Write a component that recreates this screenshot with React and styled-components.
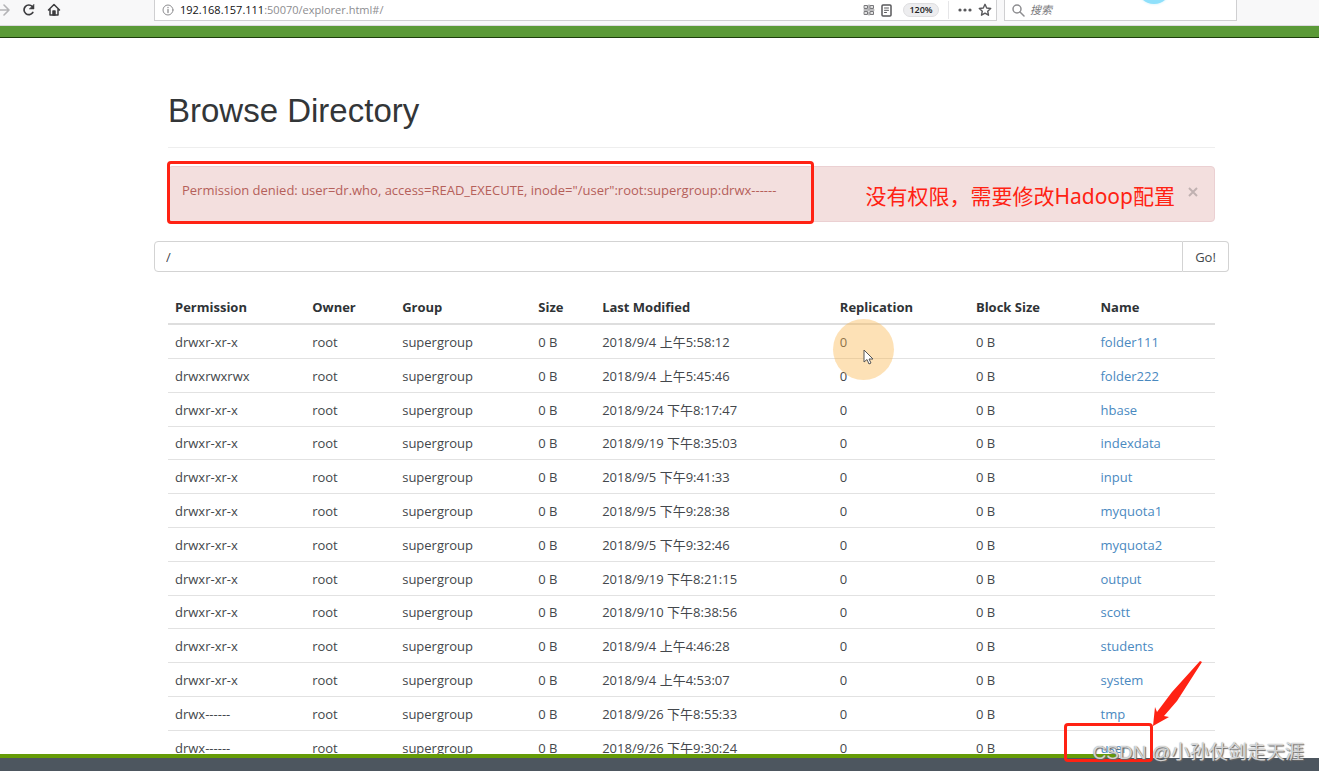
import React from "react";
import styled, { createGlobalStyle } from "styled-components";

const Global = createGlobalStyle`
  *, *::before, *::after { box-sizing: border-box; }
  html, body { margin: 0; padding: 0; height: 100%; overflow: hidden; background: #fff; }
  #root { height: 100%; }
  body {
    font-family: "Open Sans", "Noto Sans CJK SC", sans-serif;
    font-size: 13px;
    line-height: 20px;
    color: #43474b;
  }
  button, input { font: inherit; color: inherit; }
`;

const Screen = styled.div`
  position: relative;
  display: flex;
  flex-direction: column;
  height: 100vh;
  overflow: hidden;
`;

const Toolbar = styled.header`
  position: relative;
  display: grid;
  grid-template-columns: 147px minmax(0, 843px) minmax(0, 233px) minmax(0, 1fr);
  column-gap: 7px;
  flex: none;
  height: 26px;
  background: #f8f8f9;
  border-bottom: 1px solid #dcdadf;
  overflow: hidden;
`;

const NavButtons = styled.nav`
  display: flex;
  align-items: flex-start;
  margin-left: -4px;
  padding-top: 2px;
  gap: 9px;
`;

const IconButton = styled.button`
  display: flex;
  padding: 0;
  border: 0;
  background: none;
  color: ${(p) => p.$color || "#3c3c3f"};
`;

const Field = styled.div`
  display: flex;
  align-items: center;
  height: 21px;
  padding: 0 4px 0 7px;
  background: #fff;
  border: 1px solid #cfcfd1;
  border-top: 0;
  font-size: 11px;
  line-height: 20px;
  color: #8d8d90;
`;

const Address = styled.span`
  flex: 1;
  margin-left: 6px;
  strong { font-weight: 400; color: #111; }
`;

const FieldTools = styled.div`
  display: flex;
  align-items: center;
  gap: 6px;
`;

const Zoom = styled.button`
  height: 14px;
  width: 36px;
  margin-left: 4px;
  padding: 0;
  border: 1px solid #dedee0;
  border-radius: 7px;
  background: #ededef;
  color: #222;
  font-size: 9px;
  font-weight: 600;
  line-height: 12px;
`;

const Divider = styled.span`
  width: 1px;
  height: 18px;
  margin: 0 3px;
  background: #e6e6e8;
`;

const SearchInput = styled.input`
  flex: 1;
  min-width: 0;
  margin-left: 5px;
  padding: 0;
  border: 0;
  outline: 0;
  background: none;
  font-style: italic;
  &::placeholder { color: #77777a; opacity: 1; }
`;

const Bubble = styled.span`
  position: absolute;
  top: -30px;
  left: 1137px;
  width: 34px;
  height: 34px;
  border-radius: 50%;
  background: #8fe0fb;
  box-shadow: 0 0 3px #c9effb;
`;

const NavStrip = styled.div`
  flex: none;
  height: 12px;
  background: #5b9a38;
  border-bottom: 1px solid #1d3f0c;
`;

const Page = styled.main`
  flex: 1;
  min-height: 0;
  overflow: hidden;
  padding: 52px 104px 0 168px;
`;

const Title = styled.h1`
  margin: 0;
  padding-bottom: 15px;
  border-bottom: 1px solid #eee;
  font-family: "Liberation Sans", Arial, sans-serif;
  font-size: 33px;
  line-height: 42px;
  font-weight: 400;
  color: #333638;
`;

const Alert = styled.div`
  position: relative;
  display: flex;
  align-items: flex-start;
  height: 56px;
  margin-top: 18px;
  padding: 13px 15px 0 13px;
  border: 1px solid #ebd0d2;
  border-radius: 4px;
  background: #f3dfde;
  color: #b5605a;
`;

const Message = styled.span`
  flex: 1;
  white-space: nowrap;
`;

const Close = styled.button`
  padding: 0;
  border: 0;
  background: none;
  color: #c0b1b1;
  display: flex;
  margin-top: 6px;
`;

const Frame = styled.div`
  position: absolute;
  border: 3px solid #ff2213;
  border-radius: 4px;
`;

const AlertFrame = styled(Frame)`
  top: -6px;
  left: -2px;
  width: 647px;
  height: 63px;
`;

const Note = styled.span`
  position: absolute;
  top: 14px;
  right: 39px;
  font-family: "Noto Sans", "Noto Sans CJK SC", sans-serif;
  font-size: 21px;
  line-height: 30px;
  color: #ff2213;
  white-space: nowrap;
`;

const PathForm = styled.form`
  display: flex;
  height: 31px;
  margin: 19px -14px 0;
`;

const PathInput = styled.input`
  flex: 1;
  min-width: 0;
  padding: 0 11px;
  border: 1px solid #d3d3d3;
  border-radius: 4px 0 0 4px;
  background: #fff;
  outline: 0;
`;

const GoButton = styled.button`
  width: 46px;
  padding: 0;
  border: 1px solid #d3d3d3;
  border-left: 0;
  border-radius: 0 4px 4px 0;
  background: #fff;
`;

const Table = styled.table`
  width: 100%;
  margin-top: 19px;
  table-layout: fixed;
  border-collapse: separate;
  border-spacing: 0;
  th, td {
    padding: 0 0 0 7px;
    text-align: left;
    white-space: nowrap;
  }
  th {
    height: 34px;
    border-bottom: 2px solid #dedede;
    color: #2f3336;
    font-weight: 700;
  }
  td {
    height: 34px;
    border-bottom: 1px solid #e2e2e2;
  }
  tbody tr:nth-child(5n + 4) td { height: 33px; }
`;

const Col = styled.col`
  width: ${(p) => p.$w}%;
`;

const FileLink = styled.a`
  color: #4a89bf;
  text-decoration: none;
`;

const Footer = styled.footer`
  flex: none;
  height: 17px;
  padding-top: 4px;
  background: #4d565f content-box;
  position: relative;
  &::before {
    content: "";
    position: absolute;
    top: 0;
    left: 0;
    right: 202px;
    height: 4px;
    background: #669c07;
  }
`;

const Pointer = styled.span`
  position: absolute;
  top: 319px;
  left: 833px;
  width: 61px;
  height: 61px;
  border-radius: 50%;
  background: rgba(250, 181, 72, 0.4);
  svg { position: absolute; top: 30px; left: 30px; }
`;

const UserFrame = styled(Frame)`
  top: 723px;
  left: 1064px;
  width: 89px;
  height: 39px;
`;

const Arrow = styled.svg`
  position: absolute;
  top: 660px;
  left: 1150px;
`;

const Watermark = styled.span`
  position: absolute;
  right: 15px;
  bottom: 5px;
  font-family: "Liberation Sans", "Noto Sans CJK SC", sans-serif;
  font-size: 19px;
  line-height: 26px;
  color: rgba(255, 255, 255, 0.7);
  text-shadow: 1px 1px 1px #666, 0 0 1px #777;
  white-space: nowrap;
`;

const rows = [
  ["drwxr-xr-x", "2018/9/4 上午5:58:12", "folder111"],
  ["drwxrwxrwx", "2018/9/4 上午5:45:46", "folder222"],
  ["drwxr-xr-x", "2018/9/24 下午8:17:47", "hbase"],
  ["drwxr-xr-x", "2018/9/19 下午8:35:03", "indexdata"],
  ["drwxr-xr-x", "2018/9/5 下午9:41:33", "input"],
  ["drwxr-xr-x", "2018/9/5 下午9:28:38", "myquota1"],
  ["drwxr-xr-x", "2018/9/5 下午9:32:46", "myquota2"],
  ["drwxr-xr-x", "2018/9/19 下午8:21:15", "output"],
  ["drwxr-xr-x", "2018/9/10 下午8:38:56", "scott"],
  ["drwxr-xr-x", "2018/9/4 上午4:46:28", "students"],
  ["drwxr-xr-x", "2018/9/4 上午4:53:07", "system"],
  ["drwx------", "2018/9/26 下午8:55:33", "tmp"],
  ["drwx------", "2018/9/26 下午9:30:24", "user"],
];

const columns = [
  ["Permission", 13.1],
  ["Owner", 8.6],
  ["Group", 13],
  ["Size", 6.1],
  ["Last Modified", 22.7],
  ["Replication", 13],
  ["Block Size", 11.9],
  ["Name", 11.6],
];

const line = { fill: "none", stroke: "currentColor", strokeLinecap: "round", strokeLinejoin: "round" };

export default function App() {
  return (
    <Screen>
      <Global />
      <Toolbar>
        <NavButtons>
          <IconButton aria-label="Forward" $color="#b4b4b6">
            <svg width="16" height="16" viewBox="0 0 16 16" {...line} strokeWidth="1.6"><path d="M1 8h12M8 3l5 5-5 5" /></svg>
          </IconButton>
          <IconButton aria-label="Reload">
            <svg width="16" height="16" viewBox="0 0 16 16" {...line} strokeWidth="1.7"><path d="M11.800 10.500A4.800 4.800 0 1 1 11.300 4.500" /><path d="M13 2.500v4.500H8.500z" fill="currentColor" strokeWidth="0.500" /></svg>
          </IconButton>
          <IconButton aria-label="Home">
            <svg width="16" height="16" viewBox="0 0 16 16" {...line} strokeWidth="1.500"><path d="M2.500 8 8 2.500 13.500 8M4 7.500V13h8V7.500" /><path d="M7 13V9h2v4z" fill="currentColor" /></svg>
          </IconButton>
        </NavButtons>
        <Field>
          <svg width="12" height="12" viewBox="0 0 12 12" {...line}><circle cx="6" cy="6" r="5" /><path d="M6 5.500v3M6 3.300v.2" strokeWidth="1.300" /></svg>
          <Address><strong>192.168.157.111</strong>:50070/explorer.html#/</Address>
          <FieldTools>
            <IconButton aria-label="QR code" $color="#77777a">
              <svg width="12" height="12" viewBox="0 0 12 12" {...line} strokeWidth="1"><path d="M1.500 1.500h3v3h-3zM7.500 1.500h3v3h-3zM1.500 7.500h3v3h-3zM7.500 7.500h3v3h-3zM6 1v4M1 6h10M6 8v3M3 3v.1M9 3v.1M3 9v.1M9 9v.1" /></svg>
            </IconButton>
            <IconButton aria-label="Reader view" $color="#58585b">
              <svg width="12" height="13" viewBox="0 0 12 13" {...line} strokeWidth="1.500"><rect x="1" y="1" width="9" height="11" rx="1" /><path d="M3.500 4h4M3.500 6.300h4M3.500 8.500h2" strokeWidth="1" /></svg>
            </IconButton>
            <Zoom>120%</Zoom>
            <Divider />
            <IconButton aria-label="Page actions" $color="#58585b">
              <svg width="14" height="4" viewBox="0 0 14 4" fill="currentColor"><circle cx="2" cy="2" r="1.600" /><circle cx="7" cy="2" r="1.600" /><circle cx="12" cy="2" r="1.600" /></svg>
            </IconButton>
            <IconButton aria-label="Bookmark" $color="#58585b">
              <svg width="14" height="14" viewBox="0 0 14 14" {...line} strokeWidth="1.400"><path d="m7 1.300 1.700 3.700 4 .5-3 2.700.8 4L7 10.200l-3.500 2 .8-4-3-2.700 4-.5z" /></svg>
            </IconButton>
          </FieldTools>
        </Field>
        <Field as="label">
          <svg width="13" height="13" viewBox="0 0 13 13" {...line} strokeWidth="1.500"><circle cx="5" cy="5" r="4" /><path d="m8 8 4 4" /></svg>
          <SearchInput aria-label="搜索" placeholder="搜索" />
        </Field>
        <Bubble />
      </Toolbar>
      <NavStrip />
      <Page>
        <Title>Browse Directory</Title>
        <Alert role="alert">
          <Message>Permission denied: user=dr.who, access=READ_EXECUTE, inode="/user":root:supergroup:drwx------</Message>
          <Close aria-label="Close">
            <svg width="12" height="12" viewBox="0 0 12 12" stroke="currentColor" strokeWidth="2"><path d="m2 2 8 8M10 2l-8 8" /></svg>
          </Close>
          <AlertFrame />
          <Note>没有权限，需要修改Hadoop配置</Note>
        </Alert>
        <PathForm onSubmit={(e) => e.preventDefault()}>
          <PathInput aria-label="Directory path" defaultValue="/" />
          <GoButton>Go!</GoButton>
        </PathForm>
        <Table>
          <colgroup>{columns.map(([name, w]) => <Col key={name} $w={w} />)}</colgroup>
          <thead><tr>{columns.map(([name]) => <th key={name}>{name}</th>)}</tr></thead>
          <tbody>
            {rows.map(([permission, modified, name]) => (
              <tr key={name}>
                <td>{permission}</td>
                <td>root</td>
                <td>supergroup</td>
                <td>0 B</td>
                <td>{modified}</td>
                <td>0</td>
                <td>0 B</td>
                <td><FileLink href={"#/" + name}>{name}</FileLink></td>
              </tr>
            ))}
          </tbody>
        </Table>
      </Page>
      <Footer />
      <Pointer>
        <svg width="12" height="17" viewBox="0 0 12 17"><path d="M1 1v12l3-2.500 2 4.500 2-1-2-4h4z" fill="#fff" stroke="#555" strokeWidth="1" /></svg>
      </Pointer>
      <UserFrame />
      <Arrow width="54" height="68" viewBox="0 0 54 68"><path d="M50 1 52 2 27 41 14 56 19 57 3 66 5 47 7 52 22 32z" fill="#ff2213" /></Arrow>
      <Watermark>CSDN @小孙仗剑走天涯</Watermark>
    </Screen>
  );
}
